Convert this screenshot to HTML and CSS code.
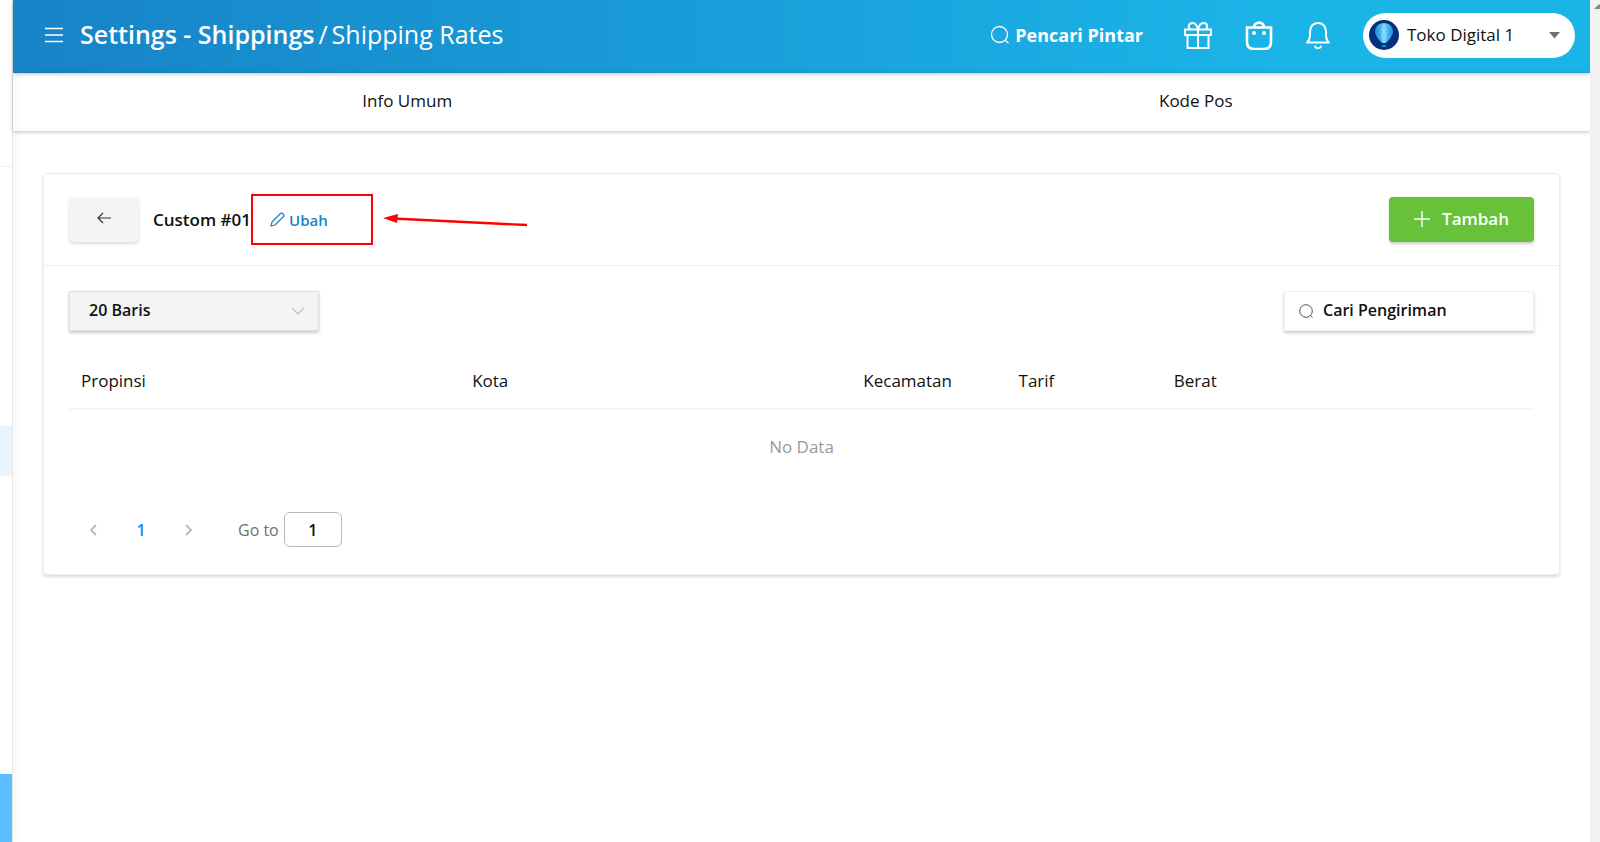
FILE: index.html
```html
<!DOCTYPE html>
<html lang="id">

<head>
    <meta charset="utf-8">
    <title>Shipping Rates</title>
    <link rel="stylesheet" href="styles.css">
</head>

<body>
    <!-- Edge of the collapsed sidebar -->
    <aside class="sidebar">
        <div class="sidebar-logo"></div>
        <div class="sidebar-active"></div>
        <div class="sidebar-footer"></div>
    </aside>

    <div class="main">
        <header class="topbar">
            <button type="button" class="icon-btn menu-btn" aria-label="Menu">
                <svg width="20" height="16" viewBox="0 0 20 16" fill="none" stroke="#fff" stroke-width="1.6">
                    <path d="M1 1.500h18M1 8h18M1 14.500h18" />
                </svg>
            </button>
            <h1 class="title"><b>Settings - Shippings</b><span>/</span><span>Shipping Rates</span></h1>

            <div class="actions">
                <a href="#" class="smart-search">
                    <svg width="20" height="20" viewBox="0 0 20 20" fill="none" stroke="#fff" stroke-width="1.3">
                        <circle cx="9.500" cy="9.500" r="8" />
                        <path d="M15.200 15.200l3.300 3" />
                    </svg>
                    Pencari Pintar
                </a>
                <button type="button" class="icon-btn" aria-label="Hadiah">
                    <svg width="30" height="30" viewBox="0 -1 30 30" fill="none" stroke="#fff" stroke-width="2">
                        <path d="M2 8.500h26v5.500H2zM4.500 14h21v13h-21zM15 8.500V27" />
                        <path d="M15 8.500C14 4 12 2 9.500 2C5.500 2 4.500 6.500 7.500 8.500M15 8.500C16 4 18 2 20.500 2C24.500 2 25.500 6.500 22.500 8.500" />
                    </svg>
                </button>
                <button type="button" class="icon-btn" aria-label="Toko">
                    <svg width="28" height="30" viewBox="1 -1 28 30" fill="none" stroke="#fff" stroke-width="2.600">
                        <path d="M3 6.500h24V21q0 7-7 7H10q-7 0-7-7z" />
                        <path d="M10 6.500c0-6.500 10-6.500 10 0" />
                        <circle cx="10" cy="12" r="2" fill="#fff" stroke="none" />
                        <circle cx="20" cy="12" r="2" fill="#fff" stroke="none" />
                    </svg>
                </button>
                <button type="button" class="icon-btn" aria-label="Notifikasi">
                    <svg width="26" height="30" viewBox="0 -1 26 30" fill="none" stroke="#fff" stroke-width="2">
                        <path d="M2 21.500c2.500-2 3-4.500 3-8V10.500c0-11.500 16-11.500 16 0v3c0 3.500.5 6 3 8z" stroke-linejoin="round" />
                        <path d="M10 25.500c.7 2.200 5.300 2.200 6 0" stroke-linecap="round" />
                    </svg>
                </button>
                <button type="button" class="store">
                    <svg width="30" height="30" viewBox="0 0 30 30">
                        <defs>
                            <linearGradient id="balloon">
                                <stop offset="0" stop-color="#0a86d4" />
                                <stop offset=".5" stop-color="#8adcfa" />
                                <stop offset="1" stop-color="#0a92e0" />
                            </linearGradient>
                        </defs>
                        <circle cx="15" cy="15" r="15" fill="#04307c" />
                        <path d="M15 3c-5.500 0-9 3.700-9 8.500 0 4.500 4 8 7 11.500h4c3-3.500 7-7 7-11.500C24 6.700 20.500 3 15 3z" fill="url(#balloon)" />
                        <path d="M15 3c-7 4-5.500 13-1.500 20M15 3c7 4 5.500 13 1.500 20" fill="none" stroke="#2a9bdc" stroke-width=".7" />
                        <rect x="13" y="25" width="4" height="2" rx="1" fill="#1596dc" />
                    </svg>
                    <span>Toko Digital 1</span>
                    <svg width="11" height="7" viewBox="0 0 11 7">
                        <path d="M0 0h11L5.500 6.500z" fill="#707070" />
                    </svg>
                </button>
            </div>
        </header>

        <nav class="tabs">
            <a href="#">Info Umum</a>
            <a href="#">Kode Pos</a>
        </nav>

        <section class="card">
            <div class="card-header">
                <button type="button" class="back-btn" aria-label="Kembali">
                    <svg width="14" height="12" viewBox="0 0 14 12" fill="none" stroke="#333" stroke-width="1.200">
                        <path d="M14 6H1M6 1L1 6l5 5" />
                    </svg>
                </button>
                <h2>Custom #01</h2>
                <div class="edit">
                    <a href="#">
                        <svg width="15" height="15" viewBox="0 0 15 15" fill="none" stroke="#1684c7" stroke-width="1.200" stroke-linejoin="round">
                            <path d="M1 14l1-4L10.500 1.500q1-1 2 0l1 1q1 1 0 2L5 13z" />
                        </svg>
                        Ubah
                    </a>
                    <svg class="arrow" width="146" height="14" viewBox="0 0 146 14">
                        <path d="M10 5.500L144 12" stroke="#f00" stroke-width="2.400" />
                        <path d="M0 5L15 1l-1 9z" fill="#f00" />
                    </svg>
                </div>
                <button type="button" class="add-btn">
                    <svg width="16" height="16" viewBox="0 0 16 16" fill="none" stroke="#fff" stroke-width="1.400">
                        <path d="M0 8h16M8 0v16" />
                    </svg>
                    Tambah
                </button>
            </div>

            <div class="card-body">
                <div class="filters">
                    <select class="rows" aria-label="Jumlah baris">
                        <option>20 Baris</option>
                    </select>
                    <label class="search">
                        <svg width="14" height="14" viewBox="0 0 14 14" fill="none" stroke="#555" stroke-width="1">
                            <circle cx="7" cy="7" r="6.300" />
                            <path d="M11 11l2.500 2.500" />
                        </svg>
                        <input type="text" placeholder="Cari Pengiriman" aria-label="Cari Pengiriman">
                    </label>
                </div>

                <table>
                    <thead>
                        <tr>
                            <th class="wide">Propinsi</th>
                            <th class="wide">Kota</th>
                            <th class="narrow">Kecamatan</th>
                            <th class="narrow">Tarif</th>
                            <th>Berat</th>
                        </tr>
                    </thead>
                    <tbody>
                        <tr>
                            <td colspan="5">No Data</td>
                        </tr>
                    </tbody>
                </table>

                <div class="pagination">
                    <button type="button" aria-label="Sebelumnya">
                        <svg width="8" height="12" viewBox="0 0 8 12" fill="none" stroke="#b4b8c0" stroke-width="1.800">
                            <path d="M7 1L2 6l5 5" />
                        </svg>
                    </button>
                    <button type="button" class="current">1</button>
                    <button type="button" aria-label="Berikutnya">
                        <svg width="8" height="12" viewBox="0 0 8 12" fill="none" stroke="#b4b8c0" stroke-width="1.800">
                            <path d="M1 1l5 5-5 5" />
                        </svg>
                    </button>
                    <label for="page">Go to</label>
                    <input type="text" id="page" value="1">
                </div>
            </div>
        </section>
    </div>

    <div class="scrollbar">
        <svg width="6" height="5" viewBox="0 0 6 5">
            <path d="M0 5l5-5 1 1v4z" fill="#8a8a8a" />
        </svg>
    </div>
</body>

</html>
```
FILE: styles.css
```css
* {
    box-sizing: border-box;
}

body {
    display: flex;
    min-height: 100vh;
    margin: 0;
    background-color: #fff;
    color: #111;
    font-family: "Open Sans", sans-serif;
    font-size: 17px;
    font-weight: 500;
}

a {
    color: inherit;
    text-decoration: none;
}

button,
input,
select {
    font: inherit;
    color: inherit;
}

button {
    display: flex;
    align-items: center;
    justify-content: center;
    padding: 0;
    border: none;
    background: none;
    cursor: pointer;
}

/* Sidebar */
.sidebar {
    display: flex;
    flex-direction: column;
    width: 13px;
    border-right: 1px solid #e8e8e8;
    box-shadow: 0 0 12px rgba(0, 0, 0, 0.06);
}

.sidebar-logo {
    height: 167px;
    border-bottom: 1px solid #f0f0f0;
}

.sidebar-active {
    height: 50px;
    margin-top: 259px;
    background-color: #eaf4fc;
}

.sidebar-footer {
    height: 68px;
    margin-top: auto;
    background-color: #5bbfff;
}

.main {
    flex: 1;
    min-width: 0;
}

/* Header */
.topbar {
    display: flex;
    align-items: center;
    height: 73px;
    padding: 0 15px 3px 31px;
    background: linear-gradient(90deg, #1783c7, #1bb4e7 80%);
    box-shadow: 0 1px 4px rgba(0, 0, 0, 0.25);
    color: #fff;
}

.title {
    display: flex;
    gap: 4px;
    margin: 0 0 0 16px;
    padding-bottom: 2px;
    font-size: 25px;
    font-weight: 400;
    line-height: 32px;
    white-space: nowrap;
}

.title b {
    font-weight: 600;
}

.actions {
    display: flex;
    align-items: center;
    gap: 32px;
    margin-left: auto;
}

.smart-search {
    display: flex;
    align-items: center;
    gap: 5px;
    margin-right: 8px;
    font-size: 18px;
    font-weight: 700;
    white-space: nowrap;
}

.store {
    gap: 8px;
    width: 212px;
    height: 45px;
    padding: 0 15px 0 6px;
    border-radius: 24px;
    background-color: #fff;
    color: #111;
    white-space: nowrap;
}

.store span {
    margin-right: auto;
    padding-bottom: 2px;
}

/* Tabs */
.tabs {
    display: flex;
    height: 58px;
    box-shadow: 0 1px 4px rgba(0, 0, 0, 0.25);
}

.tabs a {
    flex: 1;
    line-height: 56px;
    text-align: center;
}

/* Card */
.card {
    margin: 42px 30px 0;
    border: 1px solid #ebebee;
    border-radius: 4px;
    box-shadow: 0 2px 3px rgba(0, 0, 0, 0.14);
}

.card-header {
    display: flex;
    align-items: center;
    height: 92px;
    padding: 0 25px;
    border-bottom: 1px solid #ebeef5;
}

.back-btn {
    width: 70px;
    height: 45px;
    padding-bottom: 4px;
    border-radius: 5px;
    background-color: #f4f4f5;
    box-shadow: 0 2px 3px rgba(0, 0, 0, 0.14);
}

h2 {
    margin: 0 0 0 14px;
    font-size: 17px;
    font-weight: 600;
}

.edit {
    position: relative;
    width: 122px;
    height: 51px;
    padding-left: 17px;
    border: 2px solid #f00;
}

.edit a {
    display: flex;
    align-items: center;
    gap: 4px;
    height: 100%;
    color: #1684c7;
    font-size: 15px;
    font-weight: 600;
}

.arrow {
    position: absolute;
    top: 17px;
    left: 130px;
}

.add-btn {
    gap: 12px;
    width: 145px;
    height: 45px;
    margin-left: auto;
    padding-bottom: 2px;
    border-radius: 4px;
    background-color: #67c23a;
    box-shadow: 0 2px 3px rgba(0, 0, 0, 0.2);
    color: #fff;
    font-weight: 600;
}

.card-body {
    padding: 25px 25px 27px;
}

.filters {
    display: flex;
    justify-content: space-between;
}

.rows,
.search {
    width: 250px;
    height: 40px;
    box-shadow: 0 2px 3px rgba(0, 0, 0, 0.2);
    font-size: 16px;
    font-weight: 600;
}

.rows {
    padding: 0 19px 2px;
    border: 1px solid #dcdfe6;
    border-radius: 0;
    appearance: none;
    background: #f4f4f5 url("data:image/svg+xml,%3Csvg xmlns='http://www.w3.org/2000/svg' width='14' height='8' fill='none' stroke='%23c0c4cc' stroke-width='1.3'%3E%3Cpath d='M1 1l6 6 6-6'/%3E%3C/svg%3E") no-repeat right 13px center;
}

.search {
    display: flex;
    align-items: center;
    gap: 10px;
    padding: 0 14px;
    border: 1px solid #f0f0f0;
}

.search input {
    flex: 1;
    min-width: 0;
    padding: 0 0 2px;
    border: none;
    outline: none;
}

.search input::placeholder {
    color: #111;
}

/* Table */
table {
    width: 100%;
    margin-top: 22px;
    border-collapse: collapse;
    table-layout: fixed;
}

th {
    height: 56px;
    padding: 0 12px;
    border-bottom: 2px solid #f4f5fa;
    font-weight: 500;
    text-align: left;
}

.wide {
    width: 26.7%;
}

.narrow {
    width: 10.6%;
}

td {
    height: 73px;
    padding: 0;
    color: #999;
    font-weight: 400;
    text-align: center;
}

/* Pagination */
.pagination {
    display: flex;
    align-items: center;
    margin-top: 30px;
}

.pagination button {
    width: 48px;
    height: 35px;
}

.pagination .current {
    color: #1989fa;
    font-size: 16px;
    font-weight: 600;
}

.pagination label {
    margin: 0 5px 0 25px;
    color: #707070;
    font-size: 16px;
    font-weight: 400;
}

.pagination input {
    width: 58px;
    height: 35px;
    padding: 0;
    border: 1px solid #b8b8b8;
    border-radius: 6px;
    font-size: 16px;
    font-weight: 600;
    text-align: center;
}

/* Scrollbar track */
.scrollbar {
    display: flex;
    justify-content: flex-end;
    width: 10px;
    padding-top: 4px;
    background-color: #f1f1f1;
}
```
